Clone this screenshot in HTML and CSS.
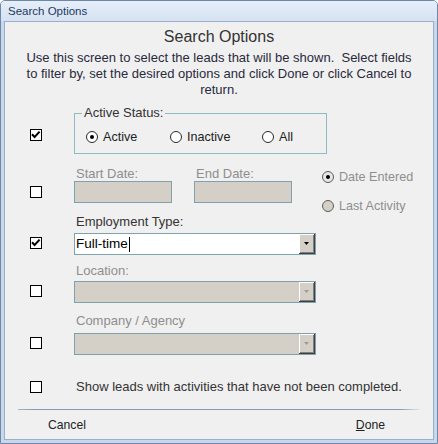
FILE: index.html
```html
<!DOCTYPE html>
<html>
<head>
<meta charset="utf-8">
<title>Search Options</title>
<link rel="stylesheet" href="styles.css">
</head>
<body>
<div class="window">
  <div class="titlebar">Search Options</div>
  <div class="client">
    <h1 class="heading">Search Options</h1>
    <p class="desc">Use this screen to select the leads that will be shown.&nbsp; Select fields<br>to filter by, set the desired options and click Done or click Cancel to<br>return.</p>

    <div class="row row-status">
      <span class="cb cb-status"><svg width="10" height="10" viewBox="0 0 10 10"><path d="M1 4.2 L3.6 7 L8.6 1.6" fill="none" stroke="#000" stroke-width="2"/></svg></span>
      <fieldset class="group">
        <legend>Active Status:</legend>
        <div class="radios">
          <span class="opt"><span class="radio on"></span>Active</span>
          <span class="opt"><span class="radio"></span>Inactive</span>
          <span class="opt"><span class="radio"></span>All</span>
        </div>
      </fieldset>
    </div>

    <div class="row row-dates">
      <span class="cb cb-dates"></span>
      <div class="datefield">
        <div class="label disabled">Start Date:</div>
        <div class="textbox"></div>
      </div>
      <div class="datefield second">
        <div class="label disabled">End Date:</div>
        <div class="textbox"></div>
      </div>
      <div class="datekind">
        <span class="opt disabled"><span class="radio dis on"></span>Date Entered</span>
        <span class="opt disabled"><span class="radio dis gray"></span>Last Activity</span>
      </div>
    </div>

    <div class="row row-emp">
      <span class="cb cb-emp"><svg width="10" height="10" viewBox="0 0 10 10"><path d="M1 4.2 L3.6 7 L8.6 1.6" fill="none" stroke="#000" stroke-width="2"/></svg></span>
      <div class="field">
        <div class="label">Employment Type:</div>
        <div class="combo combo-emp">
          <span class="value">Full-time<span class="caret"></span></span>
          <span class="btn"><svg width="5" height="3" viewBox="0 0 5 3"><path d="M0 0h5L2.5 3z" fill="#000"/></svg></span>
        </div>
      </div>
    </div>

    <div class="row row-loc">
      <span class="cb cb-loc"></span>
      <div class="field">
        <div class="label disabled">Location:</div>
        <div class="combo combo-loc disabled">
          <span class="value"></span>
          <span class="btn"><svg width="5" height="3" viewBox="0 0 5 3"><path d="M0 0h5L2.5 3z" fill="#a09c94"/></svg></span>
        </div>
      </div>
    </div>

    <div class="row row-comp">
      <span class="cb cb-comp"></span>
      <div class="field">
        <div class="label disabled">Company / Agency</div>
        <div class="combo combo-comp disabled">
          <span class="value"></span>
          <span class="btn"><svg width="5" height="3" viewBox="0 0 5 3"><path d="M0 0h5L2.5 3z" fill="#a09c94"/></svg></span>
        </div>
      </div>
    </div>

    <div class="row row-open">
      <span class="cb cb-open"></span>
      <span class="text">Show leads with activities that have not been completed.</span>
    </div>

    <div class="separator"></div>

    <div class="footer">
      <span class="cmd">Cancel</span>
      <span class="cmd"><u>D</u>one</span>
    </div>
  </div>
</div>
</body>
</html>
```

FILE: styles.css
```css
body {
  margin: 0;
  font-family: "Liberation Sans", Arial, sans-serif;
}

.window {
  width: 438px;
  height: 444px;
  box-sizing: border-box;
  border: 1px solid #6f88a8;
  border-radius: 5px 5px 0 0;
  background: #c8d7eb;
  padding: 0 3px 3px;
  display: flex;
  flex-direction: column;
}

.titlebar {
  height: 20px;
  margin: 0 -3px;
  padding-left: 7px;
  line-height: 20px;
  font-size: 11.5px;
  color: #1e3a5e;
  background: linear-gradient(#e6eef9, #d6e2f2);
  border-radius: 4px 4px 0 0;
}

.client {
  flex: 1;
  background: #f0f0f0;
  border: 1px solid #9ab0ca;
}

.heading {
  margin: 5px 0 0;
  font-size: 16px;
  font-weight: normal;
  line-height: 19px;
  text-align: center;
  color: #333;
}

.desc {
  margin: 4px 0 0;
  font-size: 13px;
  line-height: 16px;
  text-align: center;
  color: #2a2a3c;
}

.row {
  display: flex;
  align-items: flex-start;
  padding-left: 25px;
}

.cb {
  width: 12px;
  height: 12px;
  box-sizing: border-box;
  border: 1px solid #000;
  background: #fff;
  margin-right: 32px;
  flex: none;
  display: flex;
  align-items: center;
  justify-content: center;
}

.cb svg { display: block; }

.row-status { margin-top: 8px; }
.cb-status { margin-top: 23px; }

.group {
  margin: 0;
  width: 253px;
  box-sizing: border-box;
  border: 1px solid #8dbac5;
  padding: 9px 0 8px 11px;
  min-width: 0;
}

.group legend {
  padding: 0 2px;
  margin-left: -4px;
  font-size: 13px;
  line-height: 14px;
  color: #333;
}

.radios {
  display: grid;
  grid-template-columns: 84px 92px auto;
  height: 16px;
}

.opt {
  display: flex;
  align-items: center;
  gap: 5px;
  font-size: 12.6px;
  line-height: 16px;
  color: #222;
}

.opt.disabled { color: #8e8e8e; }

.radio {
  width: 12px;
  height: 12px;
  box-sizing: border-box;
  border: 1px solid #2a2a2a;
  border-radius: 50%;
  background: #fff;
  display: flex;
  align-items: center;
  justify-content: center;
  flex: none;
}

.radio.on::after {
  content: "";
  width: 4px;
  height: 4px;
  border-radius: 50%;
  background: #000;
}

.radio.dis {
  border-color: #5c5c5c;
  background: #e6e6e6;
}

.radio.dis.gray { background: #d4d0c8; }

.row-dates { margin-top: 13px; }
.cb-dates { margin-top: 19px; }

.datefield { width: 98px; }
.datefield.second { margin-left: 22px; }

.label {
  font-size: 13px;
  line-height: 14px;
  padding-left: 2px;
  color: #333;
  white-space: nowrap;
}

.label.disabled { color: #8e8e8e; }

.textbox {
  height: 22px;
  box-sizing: border-box;
  border: 1px solid #7fa3ad;
  background: #d4d0c8;
}

.datekind {
  margin-left: 30px;
  margin-top: 2px;
  display: flex;
  flex-direction: column;
  gap: 13px;
}

.row-emp { margin-top: 1px; }
.cb-emp { margin-top: 22px; }

.row-loc { margin-top: 9px; }
.cb-loc { margin-top: 21px; }

.row-comp { margin-top: 11px; }
.cb-comp { margin-top: 23px; }

.combo {
  width: 242px;
  height: 22px;
  box-sizing: border-box;
  border: 1px solid #7fa3ad;
  background: #fff;
  display: flex;
}

.combo.disabled { background: #d4d0c8; }

.combo-emp { margin-top: 4px; }
.combo-loc { margin-top: 3px; }
.combo-comp { margin-top: 5px; }

.combo .value {
  flex: 1;
  padding-left: 1px;
  font-size: 13.5px;
  line-height: 20px;
  color: #000;
  display: flex;
  align-items: center;
}

.caret {
  width: 1px;
  height: 15px;
  background: #000;
  margin-left: 1px;
}

.combo .btn {
  width: 16px;
  box-sizing: border-box;
  background: #d4d0c8;
  border-right: 1px solid #404040;
  border-bottom: 1px solid #404040;
  box-shadow: inset 1px 1px #ffffff, inset -1px -1px #808080;
  display: flex;
  align-items: center;
  justify-content: center;
}

.combo .btn svg { display: block; }

.row-open {
  margin-top: 24px;
}

.cb-open { margin-top: 2px; }

.row-open .text {
  font-size: 13px;
  line-height: 16px;
  padding-left: 2px;
  color: #333;
}

.separator {
  margin: 14px 13px 0;
  height: 1px;
  background: linear-gradient(90deg, #9fb8cc, #7f9db9 4%, #7f9db9 95%, #e0e8ef);
}

.footer {
  margin-top: 7px;
  display: flex;
  justify-content: space-between;
  padding: 0 48px 0 43px;
  font-size: 12.2px;
  line-height: 16px;
  color: #222;
}
```
